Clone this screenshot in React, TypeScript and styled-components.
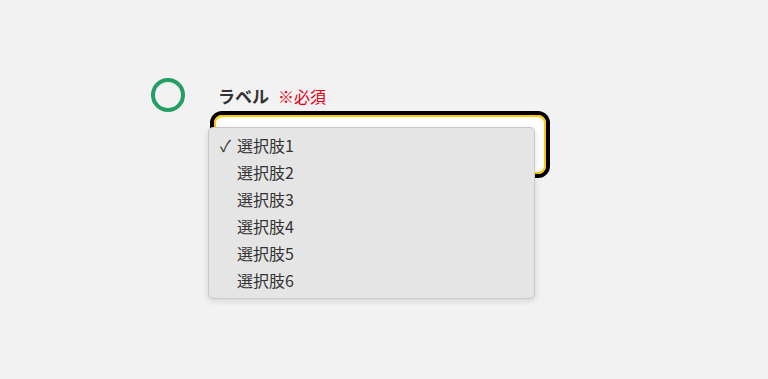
import * as React from 'react';
import styled, {createGlobalStyle} from 'styled-components';

const GlobalStyle = createGlobalStyle`
  html, body {
    margin: 0;
    padding: 0;
    background: #f2f2f2;
    font-family: "Noto Sans CJK JP", "Noto Sans", sans-serif;
    color: #333;
  }
`;

const Page = styled.div`
  display: flex;
  gap: 25px;
  padding: 78px 0 0 151px;
  height: 379px;
  box-sizing: border-box;
`;

const StepMark = styled.div`
  width: 34px;
  height: 34px;
  box-sizing: border-box;
  border: 4px solid #259d63;
  border-radius: 50%;
  flex-shrink: 0;
`;

const Field = styled.div`
  width: 340px;
  display: flex;
  flex-direction: column;
`;

const LabelRow = styled.div`
  display: flex;
  align-items: baseline;
  gap: 9px;
  margin: 6px 0 3px 8px;
  line-height: 24px;
`;

const LabelText = styled.span`
  font-size: 17px;
  font-weight: 700;
  color: #333;
`;

const Required = styled.span`
  font-size: 16px;
  color: #e60012;
`;

const SelectWrap = styled.div`
  position: relative;
`;

const FocusRing = styled.div`
  height: 67px;
  box-sizing: border-box;
  border: 4px solid #000;
  border-radius: 12px;
`;

const Control = styled.div`
  height: 100%;
  box-sizing: border-box;
  border: 2px solid #ffc700;
  border-radius: 8px;
  background: #fff;
`;

const Menu = styled.ul`
  position: absolute;
  top: 16px;
  left: -2px;
  width: 327px;
  box-sizing: border-box;
  margin: 0;
  padding: 4px 0;
  list-style: none;
  background: #e5e5e5;
  border: 1px solid #c9c9c9;
  border-radius: 5px;
  box-shadow: 0 2px 6px rgba(0, 0, 0, 0.12);
`;

const Option = styled.li`
  display: flex;
  align-items: center;
  height: 27px;
  padding-left: 11px;
  font-size: 16px;
  line-height: 27px;
  color: #333;
`;

const Check = styled.span<{ $on: boolean }>`
  width: 17px;
  font-size: 16px;
  visibility: ${p => (p.$on ? 'visible' : 'hidden')};
`;

const options = ['選択肢1', '選択肢2', '選択肢3', '選択肢4', '選択肢5', '選択肢6'];

export default function App() {
  return (
    <>
      <GlobalStyle />
      <Page>
        <StepMark />
        <Field>
          <LabelRow>
            <LabelText>ラベル</LabelText>
            <Required>※必須</Required>
          </LabelRow>
          <SelectWrap>
            <FocusRing>
              <Control />
            </FocusRing>
            <Menu>
              {options.map((o, i) => (
                <Option key={o}>
                  <Check $on={i === 0}>✓</Check>
                  {o}
                </Option>
              ))}
            </Menu>
          </SelectWrap>
        </Field>
      </Page>
    </>
  );
}
